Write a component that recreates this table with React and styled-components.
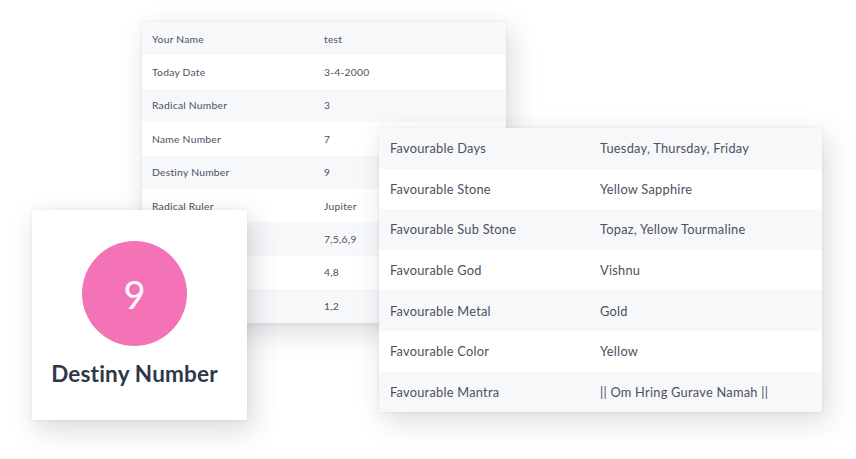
import React from "react";
import styled, { createGlobalStyle } from "styled-components";

const Global = createGlobalStyle`
  html, body { margin: 0; padding: 0; background: #ffffff; }
  body { font-family: Lato, "Open Sans", sans-serif; }
`;

const Stage = styled.div`
  position: relative;
  width: 856px;
  height: 459px;
  overflow: hidden;
  background: #ffffff;
`;

const Card = styled.div`
  position: absolute;
  left: ${(p) => p.$x}px;
  top: ${(p) => p.$y}px;
  width: ${(p) => p.$w}px;
  background: #ffffff;
  box-shadow: 5px 9px 26px rgba(30, 40, 60, 0.17), 0 0 3px rgba(30, 40, 60, 0.08);
  z-index: ${(p) => p.$z};
`;

const Row = styled.div`
  display: grid;
  grid-template-columns: ${(p) => p.$label}px 1fr;
  align-items: center;
  height: ${(p) => p.$h}px;
  padding-left: ${(p) => p.$pad}px;
  background: ${(p) => (p.$alt ? "#f7f8fa" : "#ffffff")};
  font-size: ${(p) => p.$fs}px;
  color: #4a5161;
  letter-spacing: 0.25px;
`;

const Cell = styled.span`
  white-space: nowrap;
`;

const DestinyCard = styled.div`
  position: absolute;
  left: 32px;
  top: 210px;
  width: 215px;
  height: 210px;
  background: #ffffff;
  box-shadow: 5px 9px 26px rgba(30, 40, 60, 0.19), 0 0 3px rgba(30, 40, 60, 0.08);
  z-index: 3;
  display: flex;
  flex-direction: column;
  align-items: center;
  padding: 31px 10px 0 0;
  box-sizing: border-box;
`;

const Circle = styled.div`
  width: 105px;
  height: 105px;
  border-radius: 50%;
  background: #f472b6;
  display: flex;
  align-items: center;
  justify-content: center;
  color: #ffffff;
  font-size: 38px;
  font-weight: 400;
  font-family: Lato, sans-serif;
`;

const Title = styled.div`
  margin-top: 14px;
  font-size: 22.5px;
  font-weight: 700;
  color: #2e384a;
  letter-spacing: 0.2px;
`;

const back = [
  ["Your Name", "test"],
  ["Today Date", "3-4-2000"],
  ["Radical Number", "3"],
  ["Name Number", "7"],
  ["Destiny Number", "9"],
  ["Radical Ruler", "Jupiter"],
  ["Friendly Numbers", "7,5,6,9"],
  ["Enemy Numbers", "4,8"],
  ["Neutral Numbers", "1,2"],
];

const front = [
  ["Favourable Days", "Tuesday, Thursday, Friday"],
  ["Favourable Stone", "Yellow Sapphire"],
  ["Favourable Sub Stone", "Topaz, Yellow Tourmaline"],
  ["Favourable God", "Vishnu"],
  ["Favourable Metal", "Gold"],
  ["Favourable Color", "Yellow"],
  ["Favourable Mantra", "|| Om Hring Gurave Namah ||"],
];

export default function App() {
  return (
    <>
      <Global />
      <Stage>
        <Card $x={142} $y={22} $w={364} $z={1}>
          {back.map(([k, v], i) => (
            <Row key={k} $alt={i % 2 === 0} $h={33.4} $pad={10} $label={172} $fs={10.3}>
              <Cell>{k}</Cell>
              <Cell>{v}</Cell>
            </Row>
          ))}
        </Card>
        <Card $x={379} $y={128} $w={443} $z={2}>
          {front.map(([k, v], i) => (
            <Row key={k} $alt={i % 2 === 0} $h={40.6} $pad={11} $label={210} $fs={12.8}>
              <Cell>{k}</Cell>
              <Cell>{v}</Cell>
            </Row>
          ))}
        </Card>
        <DestinyCard>
          <Circle>9</Circle>
          <Title>Destiny Number</Title>
        </DestinyCard>
      </Stage>
    </>
  );
}
